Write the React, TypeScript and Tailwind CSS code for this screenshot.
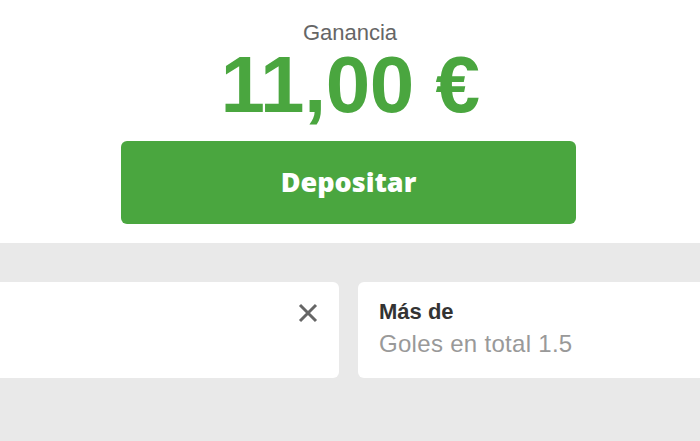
import React from "react";

export default function App() {
  return (
    <div className="w-[700px] h-[441px] overflow-hidden bg-[#e9e9e9]" style={{ fontFamily: '"Liberation Sans", Arial, sans-serif' }}>
      <div className="bg-white h-[243px] flex flex-col items-center">
        <div className="mt-[20px] text-[22px] leading-[26px] text-[#666666]">Ganancia</div>
        <div className="mt-[6px] text-[80px] leading-[66px] font-bold text-[#4aa63f] tracking-[-0.5px]">11,00 €</div>
        <button className="mt-[23px] self-start ml-[121px] w-[455px] h-[83px] rounded-[6px] bg-[#4aa63f] text-white text-[27px] font-extrabold" style={{ fontFamily: '"Open Sans", sans-serif' }}>
          Depositar
        </button>
      </div>
      <div className="pt-[39px] flex gap-[19px] -ml-[41px]">
        <div className="w-[380px] h-[96px] shrink-0 rounded-[6px] bg-white flex justify-end items-start pt-[21px] pr-[21px]">
          <svg width="20" height="20" viewBox="0 0 20 20" className="text-[#666666]">
            <path d="M2 2 L18 18 M18 2 L2 18" stroke="currentColor" strokeWidth="3" strokeLinecap="butt" />
          </svg>
        </div>
        <div className="w-[380px] h-[96px] shrink-0 rounded-[6px] bg-white pl-[21px] pt-[17px]">
          <div className="text-[22px] leading-[26px] font-bold text-[#333333]">Más de</div>
          <div className="mt-[5px] text-[24px] leading-[28px] tracking-[0.3px] text-[#999999]">Goles en total 1.5</div>
        </div>
      </div>
    </div>
  );
}
